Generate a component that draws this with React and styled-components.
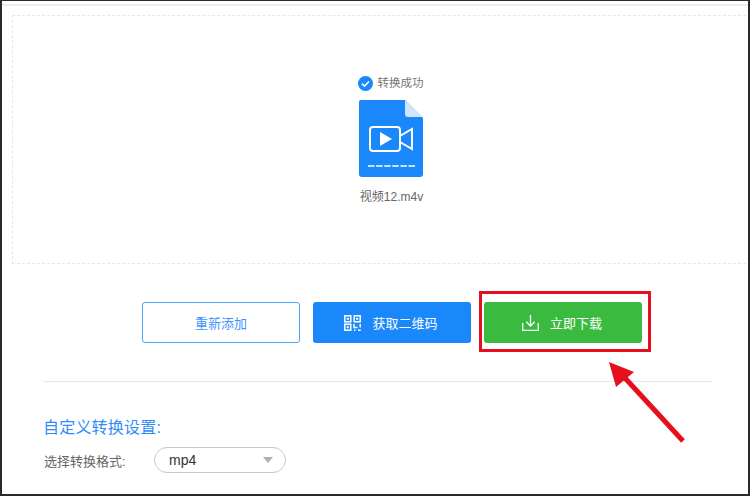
import React from 'react';
import styled, { createGlobalStyle } from 'styled-components';

const GlobalStyle = createGlobalStyle`
  html, body {
    margin: 0;
    padding: 0;
    background: #fff;
  }
  * {
    box-sizing: border-box;
  }
`;

const Frame = styled.div`
  position: relative;
  width: 750px;
  height: 496px;
  overflow: hidden;
  background: #fff;
  border-top: 1px solid #2a2a2a;
  border-left: 2px solid #2a2a2a;
  border-right: 2px solid #2a2a2a;
  border-bottom: 2px solid #2a2a2a;
  font-family: "Liberation Sans", "Noto Sans CJK SC", sans-serif;
`;

const TopLine = styled.div`
  height: 2px;
  margin-top: 3px;
  background: #e3eef5;
`;

const DropZone = styled.div`
  margin: 9px 2px 0 10px;
  height: 249px;
  border: 1px dashed #e8e8e8;
  border-right: 0;
  display: flex;
  flex-direction: column;
  align-items: center;
  padding: 59px 0 0 22px;
`;

const Status = styled.div`
  display: flex;
  align-items: center;
  gap: 5px;
  font-size: 11.5px;
  line-height: 16px;
  color: #777;
`;

const FileName = styled.div`
  margin: 12px 0 0 2px;
  font-size: 12px;
  line-height: 16px;
  color: #666;
`;

const FileIconWrap = styled.div`
  margin-top: 9px;
  height: 77px;
`;

const Actions = styled.div`
  display: flex;
  justify-content: center;
  gap: 13px;
  margin-top: 38px;
  padding-left: 34px;
`;

const Button = styled.div`
  width: 158px;
  height: 41px;
  border-radius: 3px;
  display: flex;
  align-items: center;
  justify-content: center;
  gap: 11px;
  padding-right: ${({ $outline }) => ($outline ? '0' : '2px')};
  font-size: 13px;
  color: ${({ $outline }) => ($outline ? '#3f94fb' : '#fff')};
  background: ${({ $bg }) => $bg || '#fff'};
  border: ${({ $outline }) => ($outline ? '1px solid #4da2fd' : '0')};
`;

const Divider = styled.div`
  height: 1px;
  margin: 38px 0 0 41px;
  width: 670px;
  background: #e8e8e8;
`;

const Settings = styled.div`
  margin-left: 42px;
  margin-top: 36px;
`;

const SettingsTitle = styled.div`
  margin-left: -1px;
  font-size: 16px;
  line-height: 20px;
  letter-spacing: 0.2px;
  color: #2f8cf8;
`;

const FormatRow = styled.div`
  display: flex;
  align-items: center;
  margin-top: 9px;
`;

const FormatLabel = styled.div`
  width: 110px;
  font-size: 13px;
  color: #666;
`;

const Select = styled.div`
  width: 132px;
  height: 26px;
  border: 1px solid #c8c8c8;
  border-radius: 13px;
  display: flex;
  align-items: center;
  justify-content: space-between;
  padding: 0 12px 0 14px;
  font-size: 14px;
  color: #333;
`;

const Caret = styled.div`
  width: 0;
  height: 0;
  border-left: 5px solid transparent;
  border-right: 5px solid transparent;
  border-top: 6px solid #b0b0b0;
`;

const Highlight = styled.div`
  position: absolute;
  left: 477px;
  top: 290px;
  width: 172px;
  height: 61px;
  border: 3px solid #e60f1d;
`;

const Arrow = styled.svg`
  position: absolute;
  left: 600px;
  top: 355px;
`;

const CheckIcon = () => (
  <svg width="15" height="15" viewBox="0 0 15 15">
    <circle cx="7.5" cy="7.5" r="7.5" fill="#1a87fb" />
    <path d="M4 7.6l2.5 2.5 4.5-4.6" fill="none" stroke="#fff" strokeWidth="1.5" />
  </svg>
);

const VideoFileIcon = () => (
  <svg width="64" height="77" viewBox="0 0 64 77">
    <path d="M2 0h44l18 18v56a3 3 0 0 1-3 3H3a3 3 0 0 1-3-3V2a2 2 0 0 1 2-2z" fill="#1a87fb" />
    <path d="M46 0l18 17H49a3 3 0 0 1-3-3z" fill="#cfe5fb" />
    <rect x="11" y="27" width="30" height="24" rx="3" fill="none" stroke="#fff" strokeWidth="2" />
    <path d="M41 36l12-7v20l-12-7" fill="none" stroke="#fff" strokeWidth="2" />
    <path d="M21 32l12 7-12 7z" fill="#fff" />
    <path d="M9 66h47" stroke="#fff" strokeWidth="1.5" strokeDasharray="6.5 1.6" fill="none" />
  </svg>
);

const QrIcon = () => (
  <svg width="17" height="16" viewBox="0 0 17 16" fill="none" stroke="#fff" strokeWidth="1.5">
    <rect x="0.8" y="0.8" width="6" height="6" />
    <rect x="10.2" y="0.8" width="6" height="6" />
    <rect x="0.8" y="9.2" width="6" height="6" />
    <path d="M3 3h1.600v1.600H3zM12.400 3H14v1.600h-1.600zM3 11.400h1.600V13H3z" fill="#fff" strokeWidth="0.6" />
    <path d="M10 9v3.500h3.500M16.200 9v3.500M10 15.300h1.500M14 15.300h2.800" />
  </svg>
);

const DownloadIcon = () => (
  <svg width="17" height="16" viewBox="0 0 17 16" fill="none" stroke="#fff" strokeWidth="1.3">
    <path d="M8.500 0v11M4.300 6.800l4.200 4.200 4.200-4.200" />
    <path d="M.7 8v7.300h15.600V8" />
  </svg>
);

export default function App() {
  return (
    <>
      <GlobalStyle />
      <Frame>
        <TopLine />
        <DropZone>
          <Status>
            <CheckIcon />
            转换成功
          </Status>
          <FileIconWrap>
            <VideoFileIcon />
          </FileIconWrap>
          <FileName>视频12.m4v</FileName>
        </DropZone>
        <Actions>
          <Button $outline>重新添加</Button>
          <Button $bg="#1a87fb">
            <QrIcon />
            获取二维码
          </Button>
          <Button $bg="#3abb40">
            <DownloadIcon />
            立即下载
          </Button>
        </Actions>
        <Divider />
        <Settings>
          <SettingsTitle>自定义转换设置:</SettingsTitle>
          <FormatRow>
            <FormatLabel>选择转换格式:</FormatLabel>
            <Select>
              mp4
              <Caret />
            </Select>
          </FormatRow>
        </Settings>
        <Highlight />
        <Arrow width="90" height="90" viewBox="0 0 90 90">
          <path d="M81 85L23 22" stroke="#e60f1d" strokeWidth="5" fill="none" />
          <path d="M7 6l25 10-18 15z" fill="#e60f1d" />
        </Arrow>
      </Frame>
    </>
  );
}
